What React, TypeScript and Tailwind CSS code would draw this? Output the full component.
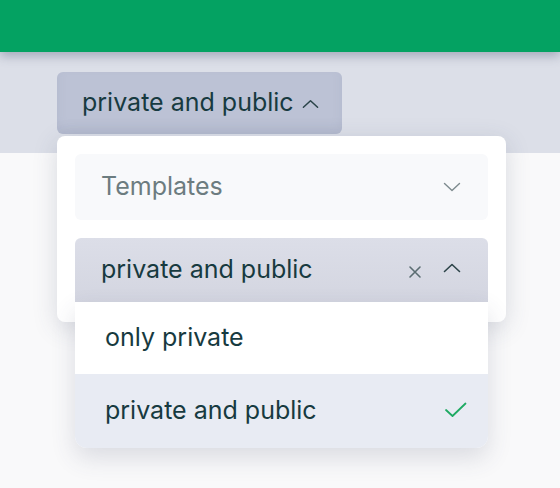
import React from 'react';

function ChevronUp({ className = '' }: { className?: string }) {
    return (
        <svg className={className} width="18" height="10" viewBox="0 0 18 10" fill="none" stroke="currentColor" strokeWidth="1.6" strokeLinecap="round" strokeLinejoin="round">
            <path d="M1.5 8.5 L9 1.5 L16.5 8.5" />
        </svg>
    );
}

function ChevronDown({ className = '' }: { className?: string }) {
    return (
        <svg className={className} width="18" height="10" viewBox="0 0 18 10" fill="none" stroke="currentColor" strokeWidth="1.4" strokeLinecap="round" strokeLinejoin="round">
            <path d="M1.5 1.5 L9 8.5 L16.5 1.5" />
        </svg>
    );
}

export default function App() {
    return (
        <div className="w-[560px] h-[488px] bg-[#f9f9fa] overflow-hidden relative" style={{ fontFamily: 'Inter, "Noto Sans", sans-serif' }}>
            <div className="h-[52px] bg-[#04a262] relative z-10 shadow-[0_4px_10px_rgba(60,70,100,0.35)]" />
            <div className="h-[101px] bg-[#dcdfe8] px-[57px] pt-[20px]">
                <div className="relative w-[285px]">
                    <button className="w-[285px] h-[62px] rounded-md bg-[#bcc2d5] flex items-center pl-[25px] gap-[8px] text-[25px] text-[#173a40] shadow-[inset_0_-6px_8px_rgba(150,160,185,0.25)]">
                        <span>private and public</span>
                        <ChevronUp className="w-[17px] text-[#2a4449] mt-[2px]" />
                    </button>

                    <div className="absolute left-0 top-[64px] w-[449px] bg-white rounded-lg shadow-[0_6px_24px_rgba(60,70,100,0.18)] p-[18px] flex flex-col gap-[18px] z-20">
                        <div className="h-[66px] rounded-md bg-[#f8f9fb] flex items-center justify-between pl-[26px] pr-[27px]">
                            <span className="text-[25px] text-[#6c7c80]">Templates</span>
                            <ChevronDown className="text-[#7d8a8e]" />
                        </div>
                        <div className="relative">
                            <div className="h-[66px] rounded-t-md bg-gradient-to-b from-[#dcdee8] to-[#d3d5e0] flex items-center justify-between pl-[26px] pr-[27px] pb-[2px]">
                                <span className="text-[25px] text-[#173a40]">private and public</span>
                                <div className="flex items-center gap-[21px]">
                                    <svg width="14" height="14" viewBox="0 0 14 14" stroke="#5b6d72" strokeWidth="1.6" strokeLinecap="round" className="mt-[4px]">
                                        <path d="M2 2 L12 12 M12 2 L2 12" />
                                    </svg>
                                    <ChevronUp className="text-[#2d4449] -mt-[4px]" />
                                </div>
                            </div>
                            <div className="absolute left-0 top-[64px] w-full bg-white rounded-b-xl shadow-[0_10px_24px_rgba(60,70,100,0.16)] overflow-hidden">
                                <div className="h-[72px] flex items-center pl-[30px] text-[25px] text-[#173a40]">only private</div>
                                <div className="h-[74px] flex items-center justify-between pl-[30px] pr-[20px] bg-[#e8ebf3] text-[25px] text-[#173a40]">
                                    <span>private and public</span>
                                    <svg width="24" height="18" viewBox="0 0 24 18" fill="none" stroke="#1faa63" strokeWidth="1.8" strokeLinecap="round" strokeLinejoin="round" className="mt-[-2px]">
                                        <path d="M2 9 L8.5 15 L21.5 2.5" />
                                    </svg>
                                </div>
                            </div>
                        </div>
                    </div>
                </div>
            </div>
        </div>
    );
}
